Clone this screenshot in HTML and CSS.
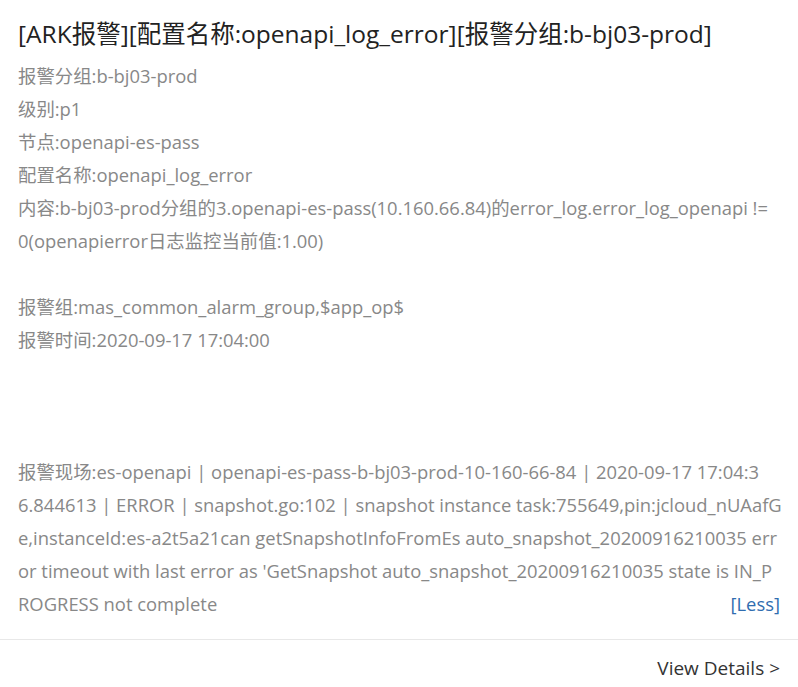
FILE: index.html
```html
<!DOCTYPE html>
<html lang="zh-CN">
<head>
<meta charset="utf-8">
<title>ARK报警</title>
<link rel="stylesheet" href="styles.css">
</head>
<body>
<div class="card">
  <div class="card-body">
    <h1 class="title">[ARK报警][配置名称:openapi_log_error][报警分组:b-bj03-prod]</h1>
    <div class="content">
      <div class="line">报警分组:b-bj03-prod</div>
      <div class="line">级别:p1</div>
      <div class="line">节点:openapi-es-pass</div>
      <div class="line">配置名称:openapi_log_error</div>
      <div class="line">内容:b-bj03-prod分组的3.openapi-es-pass(10.160.66.84)的error_log.error_log_openapi !=</div>
      <div class="line">0(openapierror日志监控当前值:1.00)</div>
      <div class="line blank"></div>
      <div class="line">报警组:mas_common_alarm_group,$app_op$</div>
      <div class="line">报警时间:2020-09-17 17:04:00</div>
      <div class="line blank"></div>
      <div class="line blank"></div>
      <div class="line blank"></div>
      <div class="line">报警现场:es-openapi | openapi-es-pass-b-bj03-prod-10-160-66-84 | 2020-09-17 17:04:3</div>
      <div class="line">6.844613 | ERROR | snapshot.go:102 | snapshot instance task:755649,pin:jcloud_nUAafG</div>
      <div class="line">e,instanceId:es-a2t5a21can getSnapshotInfoFromEs auto_snapshot_20200916210035 err</div>
      <div class="line">or timeout with last error as 'GetSnapshot auto_snapshot_20200916210035 state is IN_P</div>
      <div class="line last"><span>ROGRESS not complete</span><a class="less" href="#">[Less]</a></div>
    </div>
  </div>
  <div class="card-footer">
    <a class="details" href="#">View Details &gt;</a>
  </div>
</div>
</body>
</html>
```
FILE: styles.css
```css
html, body {
  margin: 0;
  padding: 0;
  background: #ffffff;
}
body {
  font-family: "Open Sans", "Noto Sans CJK SC", sans-serif;
}
.card {
  width: 798px;
}
.card-body {
  padding: 19px 18px 19px 18px;
}
.title {
  margin: 0 0 10px 0;
  font-size: 24.5px;
  line-height: 30px;
  font-weight: 400;
  color: #222222;
  white-space: nowrap;
}
.content {
  font-size: 18.4px;
  line-height: 33px;
  color: #888888;
}
.line {
  white-space: nowrap;
  height: 33px;
}
.last {
  display: flex;
  justify-content: space-between;
}
.less {
  color: #2f6db0;
  text-decoration: none;
}
.card-footer {
  border-top: 1px solid #e8e8e8;
  display: flex;
  justify-content: flex-end;
  padding: 14px 18px 0 18px;
  height: 40px;
}
.details {
  font-size: 19px;
  line-height: 28px;
  color: #333333;
  text-decoration: none;
}
```
